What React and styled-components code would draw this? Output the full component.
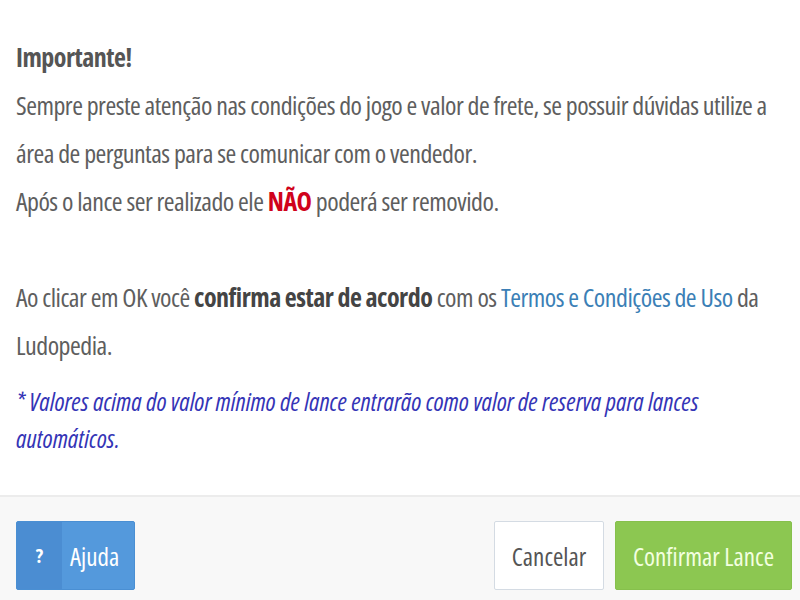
import React from 'react';
import styled, { createGlobalStyle } from 'styled-components';

const GlobalStyle = createGlobalStyle`
  html, body {
    margin: 0;
    padding: 0;
    background: #ffffff;
  }
  body {
    font-family: 'Open Sans', 'Liberation Sans', sans-serif;
    font-stretch: 75%;
  }
`;

const Modal = styled.div`
  width: 800px;
  height: 600px;
  display: flex;
  flex-direction: column;
  overflow: hidden;
`;

const ModalBody = styled.div`
  height: 495px;
  box-sizing: border-box;
  padding: 33px 16px 0 16px;
  color: #5e5e5e;
  font-size: 26px;
  letter-spacing: -0.5px;
  line-height: 48px;
`;

const Title = styled.div`
  font-weight: 700;
  color: #555555;
`;

const Paragraph = styled.p`
  margin: 0;
`;

const Strong = styled.b`
  font-weight: 700;
  color: ${p => (p.$alert ? '#d0021b' : '#444444')};
`;

const TermsLink = styled.a`
  color: #3b7fb6;
  text-decoration: none;
`;

const Note = styled.p`
  margin: 14px 0 0 0;
  font-size: 25px;
  letter-spacing: 0.05px;
  line-height: 37px;
  font-style: italic;
  color: #3434b6;
`;

const Footer = styled.div`
  flex: 1;
  border-top: 2px solid #ececec;
  background: #f8f8f8;
  display: flex;
  align-items: flex-start;
  justify-content: space-between;
  padding: 24px 8px 0 16px;
`;

const Actions = styled.div`
  display: flex;
  gap: 11px;
`;

const Button = styled.button`
  height: 69px;
  border: 1px solid transparent;
  border-radius: 2px;
  font-family: inherit;
  font-stretch: 75%;
  font-size: 25px;
  padding: 0 16px;
  cursor: pointer;
  box-sizing: border-box;
`;

const HelpButton = styled(Button)`
  display: flex;
  align-items: stretch;
  padding: 0;
  width: 119px;
  background: #5499dc;
  border-color: #4a8fd3;
  color: #ffffff;
`;

const HelpIcon = styled.span`
  width: 45px;
  display: flex;
  align-items: center;
  justify-content: center;
  background: #4b8dd2;
  font-weight: 700;
  font-size: 20px;
`;

const HelpLabel = styled.span`
  flex: 1;
  display: flex;
  align-items: center;
  padding-left: 8px;
`;

const CancelButton = styled(Button)`
  width: 110px;
  background: #ffffff;
  border-color: #d4dbe3;
  color: #555555;
`;

const ConfirmButton = styled(Button)`
  width: 177px;
  background: #8cc751;
  border-color: #86c04c;
  color: #f3ffe0;
`;

export default function App() {
  return (
    <>
      <GlobalStyle />
      <Modal>
        <ModalBody>
          <Title>Importante!</Title>
          <Paragraph>
            Sempre preste atenção nas condições do jogo e valor de frete, se possuir dúvidas utilize a
            área de perguntas para se comunicar com o vendedor.
            <br />
            Após o lance ser realizado ele <Strong $alert>NÃO</Strong> poderá ser removido.
            <br />
            <br />
            Ao clicar em OK você <Strong>confirma estar de acordo</Strong> com os{' '}
            <TermsLink href="#">Termos e Condições de Uso</TermsLink> da Ludopedia.
          </Paragraph>
          <Note>
            * Valores acima do valor mínimo de lance entrarão como valor de reserva para lances
            automáticos.
          </Note>
        </ModalBody>
        <Footer>
          <HelpButton>
            <HelpIcon>?</HelpIcon>
            <HelpLabel>Ajuda</HelpLabel>
          </HelpButton>
          <Actions>
            <CancelButton>Cancelar</CancelButton>
            <ConfirmButton>Confirmar Lance</ConfirmButton>
          </Actions>
        </Footer>
      </Modal>
    </>
  );
}
